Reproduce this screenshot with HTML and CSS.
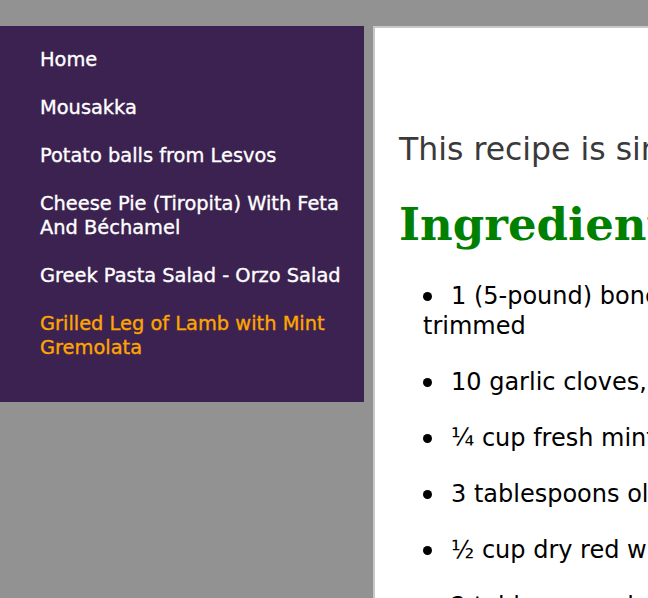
FILE: index.html
```html
<!DOCTYPE html>
<html lang="en">
<head>
<meta charset="utf-8">
<title>Grilled Leg of Lamb with Mint Gremolata</title>
<link rel="stylesheet" href="styles.css">
</head>
<body>
<div class="page">
  <nav class="sidebar">
    <ul class="menu">
      <li><a href="#">Home</a></li>
      <li><a href="#">Mousakka</a></li>
      <li><a href="#">Potato balls from Lesvos</a></li>
      <li><a href="#">Cheese Pie (Tiropita) With Feta And Béchamel</a></li>
      <li><a href="#">Greek Pasta Salad - Orzo Salad</a></li>
      <li><a href="#" class="active">Grilled Leg of Lamb with Mint Gremolata</a></li>
    </ul>
  </nav>
  <main class="content">
    <p class="intro">This recipe is simple and full of Mediterranean flavour.</p>
    <h1 class="title">Ingredients</h1>
    <ul class="ingredients">
      <li>1 (5-pound) boneless leg of lamb, butterflied and trimmed</li>
      <li>10 garlic cloves, minced</li>
      <li>¼ cup fresh mint, chopped</li>
      <li>3 tablespoons olive oil</li>
      <li>½ cup dry red wine</li>
      <li>2 tablespoons lemon juice</li>
    </ul>
  </main>
</div>
</body>
</html>
```
FILE: styles.css
```css
html, body {
  margin: 0;
  padding: 0;
  background: #929292;
  overflow: hidden;
}
.page {
  display: flex;
  align-items: flex-start;
  gap: 9px;
  padding-top: 26px;
  width: 1400px;
}
.sidebar {
  flex: 0 0 364px;
  box-sizing: border-box;
  height: 376px;
  background: #3c2250;
  padding: 22px 16px 0 40px;
}
.menu {
  list-style: none;
  margin: 0;
  padding: 0;
}
.menu li {
  margin: 0 0 24px;
  font-family: "DejaVu Sans", Verdana, sans-serif;
  font-size: 19.4px;
  line-height: 24px;
}
.menu a {
  color: #ffffff;
  text-decoration: none;
  -webkit-text-stroke: 0.35px #ffffff;
}
.menu a.active {
  color: #ffa500;
  -webkit-text-stroke: 0.35px #ffa500;
}
.content {
  flex: 0 0 auto;
  width: 700px;
  min-height: 700px;
  background: #ffffff;
  border: 2px solid #c8c8c8;
  padding: 0 24px;
}
.intro {
  margin: 99px 0 0;
  font-family: "DejaVu Sans", Verdana, sans-serif;
  font-size: 31.5px;
  line-height: 44px;
  color: #3a3a3a;
  white-space: nowrap;
}
.title {
  margin: 26px 0 0;
  font-family: "DejaVu Serif", Georgia, serif;
  font-weight: bold;
  font-size: 45px;
  line-height: 56px;
  color: #008000;
}
.ingredients {
  list-style: none;
  margin: 28px 0 0;
  padding-left: 24px;
  font-family: "DejaVu Sans", Verdana, sans-serif;
  font-size: 24px;
  line-height: 30px;
  color: #000000;
}
.ingredients li {
  margin-bottom: 26px;
}
.ingredients li::before {
  content: "";
  display: inline-block;
  width: 9px;
  height: 9px;
  border-radius: 50%;
  background: #000000;
  margin-right: 19px;
  vertical-align: 3px;
}
```
